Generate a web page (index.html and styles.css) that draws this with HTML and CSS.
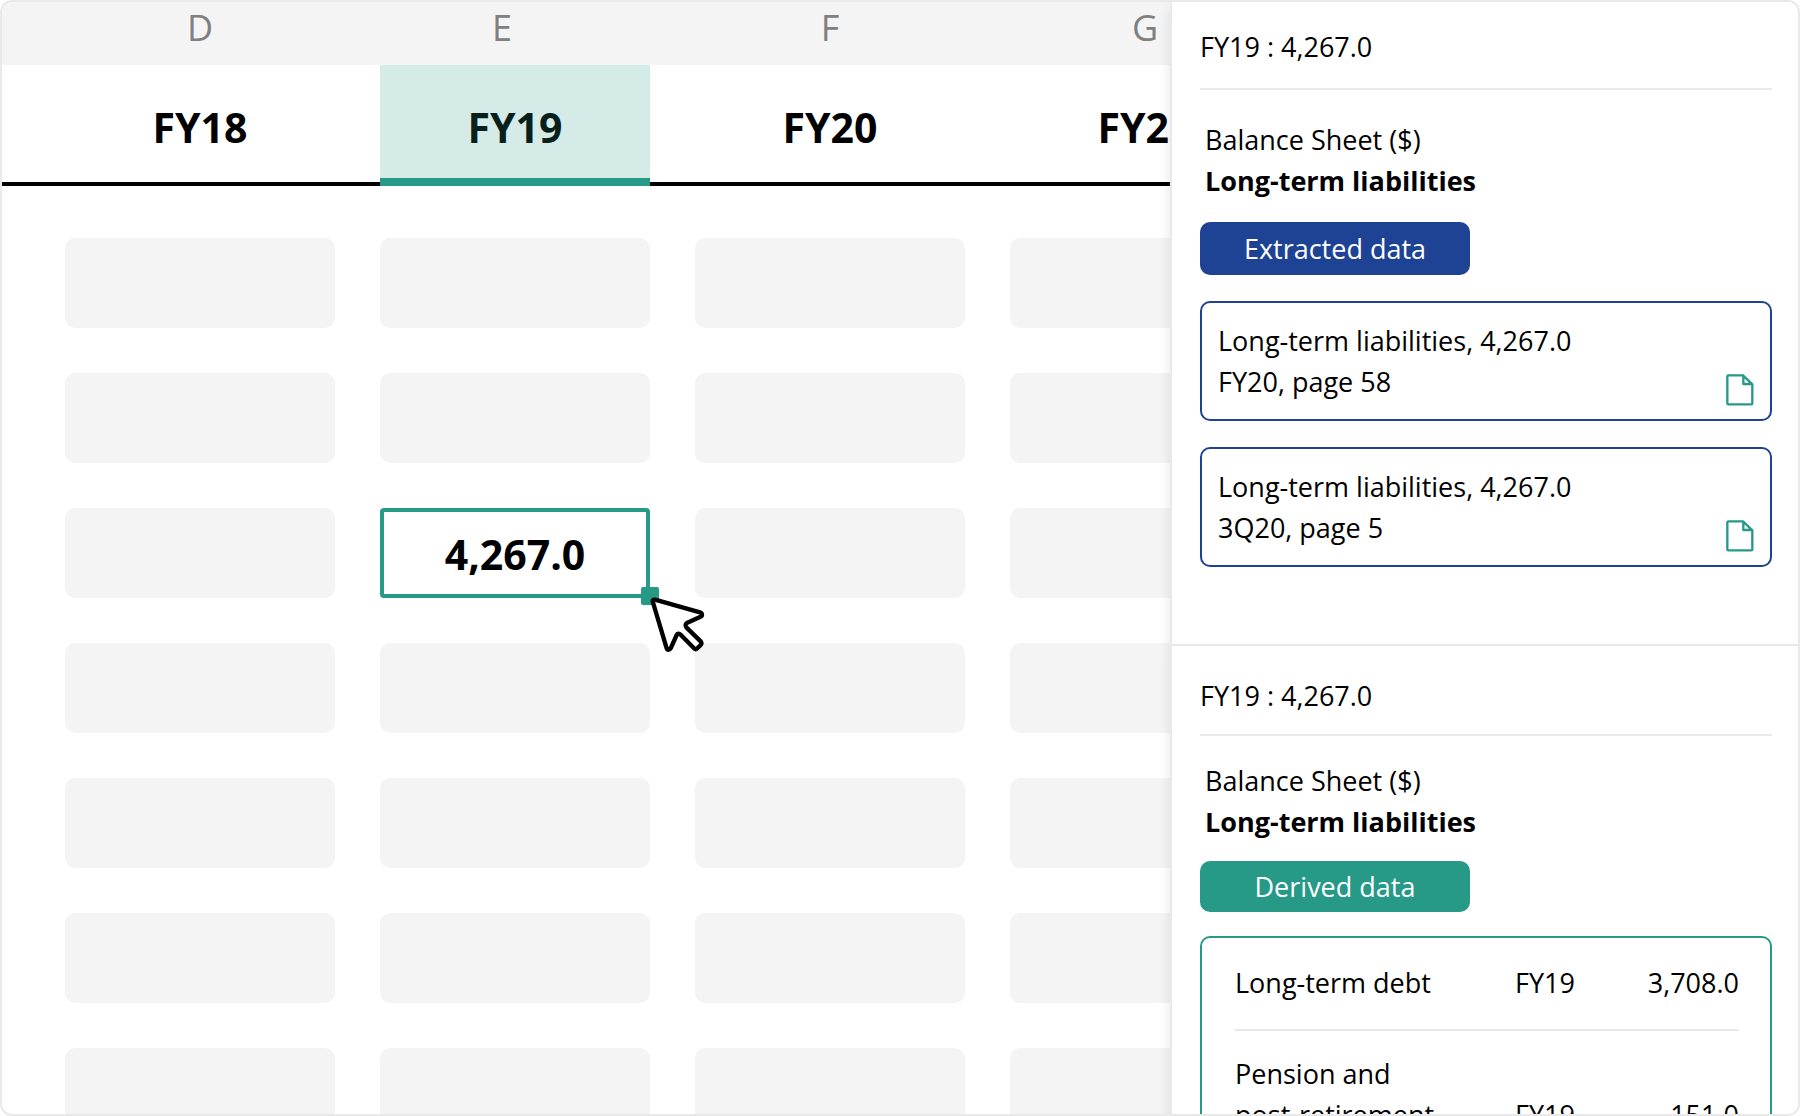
FILE: index.html
```html
<!DOCTYPE html>
<html lang="en">

<head>
    <meta charset="UTF-8">
    <meta name="viewport" content="width=device-width, initial-scale=1.0">
    <title>Balance Sheet</title>
    <link rel="stylesheet" href="styles.css">
</head>

<body>
    <div class="window">
        <main class="sheet">
            <table class="grid">
                <colgroup>
                    <col class="col-gutter">
                    <col><col><col><col>
                </colgroup>
                <thead>
                    <tr class="letters">
                        <td></td>
                        <th>D</th>
                        <th class="letter-active">E</th>
                        <th>F</th>
                        <th>G</th>
                    </tr>
                    <tr class="years">
                        <td></td>
                        <th><span class="year">FY18</span></th>
                        <th><span class="year year-active">FY19</span></th>
                        <th><span class="year">FY20</span></th>
                        <th><span class="year">FY21</span></th>
                    </tr>
                </thead>
                <tbody>
                    <tr>
                        <td></td>
                        <td><div class="cell"></div></td>
                        <td><div class="cell"></div></td>
                        <td><div class="cell"></div></td>
                        <td><div class="cell"></div></td>
                    </tr>
                    <tr>
                        <td></td>
                        <td><div class="cell"></div></td>
                        <td><div class="cell"></div></td>
                        <td><div class="cell"></div></td>
                        <td><div class="cell"></div></td>
                    </tr>
                    <tr>
                        <td></td>
                        <td><div class="cell"></div></td>
                        <td>
                            <div class="cell cell-selected">
                                4,267.0
                                <span class="handle"></span>
                                <svg class="cursor" viewBox="0 0 180 180" aria-hidden="true">
                                    <path d="M14 22C14 18 17 16 21 17L156 55C164 58 164 66 156 69L118 86C112 89 111 95 115 100L158 142C161 146 161 150 158 153L148 163C145 166 141 166 138 163L98 122C93 117 88 118 86 123L68 163C65 169 58 169 56 163Z" />
                                </svg>
                            </div>
                        </td>
                        <td><div class="cell"></div></td>
                        <td><div class="cell"></div></td>
                    </tr>
                    <tr>
                        <td></td>
                        <td><div class="cell"></div></td>
                        <td><div class="cell"></div></td>
                        <td><div class="cell"></div></td>
                        <td><div class="cell"></div></td>
                    </tr>
                    <tr>
                        <td></td>
                        <td><div class="cell"></div></td>
                        <td><div class="cell"></div></td>
                        <td><div class="cell"></div></td>
                        <td><div class="cell"></div></td>
                    </tr>
                    <tr>
                        <td></td>
                        <td><div class="cell"></div></td>
                        <td><div class="cell"></div></td>
                        <td><div class="cell"></div></td>
                        <td><div class="cell"></div></td>
                    </tr>
                    <tr>
                        <td></td>
                        <td><div class="cell"></div></td>
                        <td><div class="cell"></div></td>
                        <td><div class="cell"></div></td>
                        <td><div class="cell"></div></td>
                    </tr>
                </tbody>
            </table>
        </main>

        <aside class="side">
            <section class="panel panel-extracted">
                <p class="panel-title">FY19 : 4,267.0</p>
                <h2 class="heading">
                    Balance Sheet ($)
                    <strong>Long-term liabilities</strong>
                </h2>
                <button class="tag tag-blue" type="button">Extracted data</button>
                <div class="source">
                    <p>Long-term liabilities, 4,267.0<br>FY20, page 58</p>
                    <a class="doc-link" href="#fy20" aria-label="Open FY20, page 58">
                        <svg class="doc-icon" viewBox="0 0 84 96">
                            <path d="M7 4H51L79 31V88Q79 91 76 91H7Q4 91 4 88V7Q4 4 7 4ZM52 5V30H78" />
                        </svg>
                    </a>
                </div>
                <div class="source">
                    <p>Long-term liabilities, 4,267.0<br>3Q20, page 5</p>
                    <a class="doc-link" href="#3q20" aria-label="Open 3Q20, page 5">
                        <svg class="doc-icon" viewBox="0 0 84 96">
                            <path d="M7 4H51L79 31V88Q79 91 76 91H7Q4 91 4 88V7Q4 4 7 4ZM52 5V30H78" />
                        </svg>
                    </a>
                </div>
            </section>

            <section class="panel panel-derived">
                <p class="panel-title">FY19 : 4,267.0</p>
                <h2 class="heading">
                    Balance Sheet ($)
                    <strong>Long-term liabilities</strong>
                </h2>
                <button class="tag tag-green" type="button">Derived data</button>
                <div class="breakdown">
                    <table>
                        <tr>
                            <td>Long-term debt</td>
                            <td class="period">FY19</td>
                            <td class="amount">3,708.0</td>
                        </tr>
                        <tr>
                            <td>Pension and<br>post-retirement</td>
                            <td class="period">FY19</td>
                            <td class="amount">151.0</td>
                        </tr>
                    </table>
                </div>
            </section>
        </aside>
    </div>
</body>

</html>
```

FILE: styles.css
```css
* {
    box-sizing: border-box;
}

body {
    margin: 0;
    font-family: "Open Sans", "Noto Sans", sans-serif;
    font-size: 27px;
    line-height: 41px;
    color: #000;
    background-color: #fff;
}

p,
h2 {
    margin: 0;
}

.window {
    display: flex;
    height: 100vh;
    border: 2px solid #e9e9e9;
    border-radius: 12px;
    overflow: hidden;
}

/* Spreadsheet */
.sheet {
    flex: 1;
    min-width: 0;
    overflow: hidden;
}

.grid {
    width: 1300px;
    table-layout: fixed;
    border-collapse: collapse;
}

.grid th,
.grid td {
    padding: 0 22px 0 23px;
}

.grid .col-gutter {
    width: 40px;
}

.letters {
    height: 63px;
    background-color: #f4f4f4;
}

.grid .letters th {
    padding-bottom: 13px;
    font-size: 36px;
    font-weight: normal;
    color: #808080;
}

.grid .letters .letter-active {
    padding-right: 48px;
}

/* the rule runs under the whole row, the active year sits over it */
.years {
    background: linear-gradient(#000, #000) bottom / 100% 4px no-repeat;
}

.year {
    display: block;
    height: 121px;
    line-height: 124px;
    font-size: 41px;
    font-weight: bold;
}

.year-active {
    color: #081f1b;
    background-color: #d5ebe7;
    border-bottom: 8px solid #269987;
}

.grid tbody td {
    padding-bottom: 45px;
}

.grid tbody tr:first-child td {
    padding-top: 52px;
}

.cell {
    height: 90px;
    border-radius: 10px;
    background-color: #f4f4f4;
}

.cell-selected {
    position: relative;
    border: 4px solid #269987;
    border-radius: 4px;
    background-color: #fff;
    line-height: 84px;
    font-size: 41px;
    font-weight: bold;
    text-align: center;
}

.handle {
    position: absolute;
    right: -13px;
    bottom: -11px;
    width: 18px;
    height: 18px;
    border-radius: 2px;
    background-color: #269987;
}

.cursor {
    position: absolute;
    left: 264px;
    top: 82px;
    width: 60px;
    height: 60px;
    fill: #fff;
    stroke: #000;
    stroke-width: 13;
    stroke-linejoin: round;
}

/* Side panels */
.side {
    flex: 0 0 628px;
    display: flex;
    flex-direction: column;
}

.panel {
    padding: 0 26px 0 28px;
    border-left: 2px solid #e9e9e9;
    background-color: #fff;
    box-shadow: 0 8px 12px rgba(0, 0, 0, 0.1);
}

.panel-extracted {
    flex: 0 0 642px;
    padding-top: 24px;
}

.panel-derived {
    flex: 1 0 auto;
    padding-top: 29px;
    border-top: 2px solid #e9e9e9;
}

.panel-title {
    padding-bottom: 21px;
    border-bottom: 2px solid #e9e9e9;
}

.panel-derived .panel-title {
    padding-bottom: 18px;
}

.heading {
    padding: 29px 5px 21px;
    font-size: 27px;
    font-weight: normal;
}

.panel-derived .heading {
    padding-top: 24px;
    padding-bottom: 19px;
}

.heading strong {
    display: block;
}

.tag {
    display: block;
    width: 270px;
    height: 53px;
    padding: 0;
    border: none;
    border-radius: 10px;
    font: inherit;
    color: #fff;
    cursor: pointer;
}

.tag-blue {
    background-color: #1e4294;
}

.tag-green {
    height: 51px;
    background-color: #269987;
}

.source {
    display: flex;
    justify-content: space-between;
    min-height: 120px;
    margin-top: 26px;
    padding: 17px 16px 13px;
    border: 2px solid #1e4294;
    border-radius: 10px;
}

.doc-link {
    align-self: flex-end;
}

.doc-icon {
    display: block;
    width: 28px;
    height: 32px;
    fill: none;
    stroke: #269987;
    stroke-width: 7;
    stroke-linejoin: round;
}

.breakdown {
    margin-top: 24px;
    padding: 0 31px 24px 33px;
    border: 2px solid #269987;
    border-radius: 10px;
}

.breakdown table {
    width: 100%;
    border-collapse: collapse;
}

.breakdown td {
    padding: 24px 0 26px;
    vertical-align: bottom;
}

.breakdown tr + tr td {
    padding-top: 22px;
    border-top: 2px solid #e9e9e9;
}

.breakdown .period {
    width: 90px;
}

.breakdown .amount {
    width: 134px;
    text-align: right;
}
```
